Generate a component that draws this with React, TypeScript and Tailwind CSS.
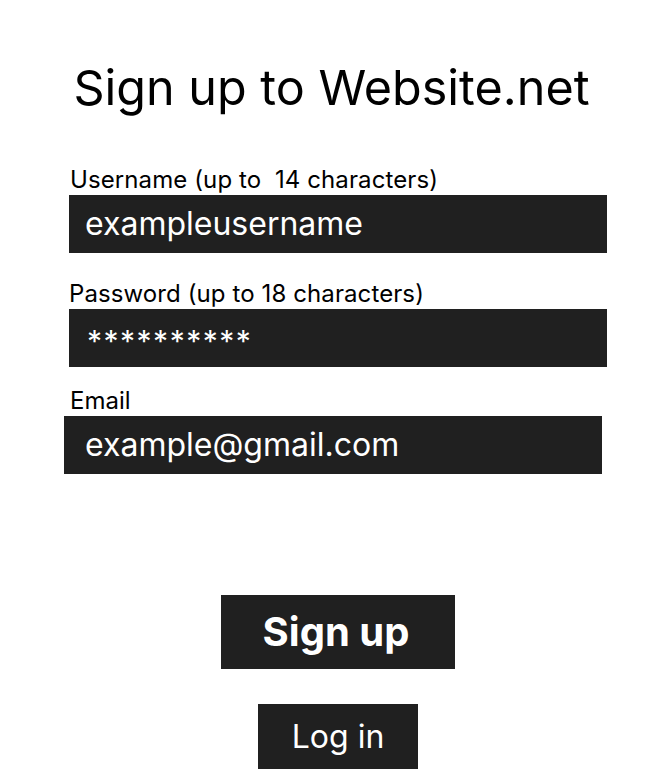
export default function App() {
  return (
    <div className="min-h-[781px] w-full bg-white font-['Inter',sans-serif] text-black">
      <h1 className="pt-[62px] text-center text-[48.5px] leading-[52px] font-normal">
        Sign up to Website.net
      </h1>

      <div className="mt-[55px] flex flex-col">
        <label className="ml-[70px] pb-[4px] text-[24px] leading-[22px] tracking-[0.1px] whitespace-pre">
          Username (up to  14 characters)
        </label>
        <div className="ml-[69px] flex h-[58px] w-[538px] items-center bg-[#202020] pl-[16px] text-[32px] text-white">
          exampleusername
        </div>

        <label className="mt-[30px] ml-[69px] pb-[4px] text-[24px] leading-[22px] tracking-[0.1px]">
          Password (up to 18 characters)
        </label>
        <div className="ml-[69px] flex h-[58px] w-[538px] items-center bg-[#202020] pl-[18px] pt-[6px] text-[30px] tracking-[1.5px] text-white">
          **********
        </div>

        <label className="mt-[23px] ml-[70px] pb-[4px] text-[24px] leading-[22px]">
          Email
        </label>
        <div className="ml-[64px] flex h-[58px] w-[538px] items-center bg-[#202020] pl-[21px] text-[32px] text-white">
          example@gmail.com
        </div>
      </div>

      <div className="mt-[121px] flex flex-col items-center">
        <button className="ml-[13px] h-[74px] w-[234px] bg-[#202020] pr-[4px] text-[40px] font-bold text-white">
          Sign up
        </button>
        <button className="mt-[35px] ml-[13px] h-[65px] w-[160px] bg-[#202020] text-[32px] text-white">
          Log in
        </button>
      </div>
    </div>
  );
}
